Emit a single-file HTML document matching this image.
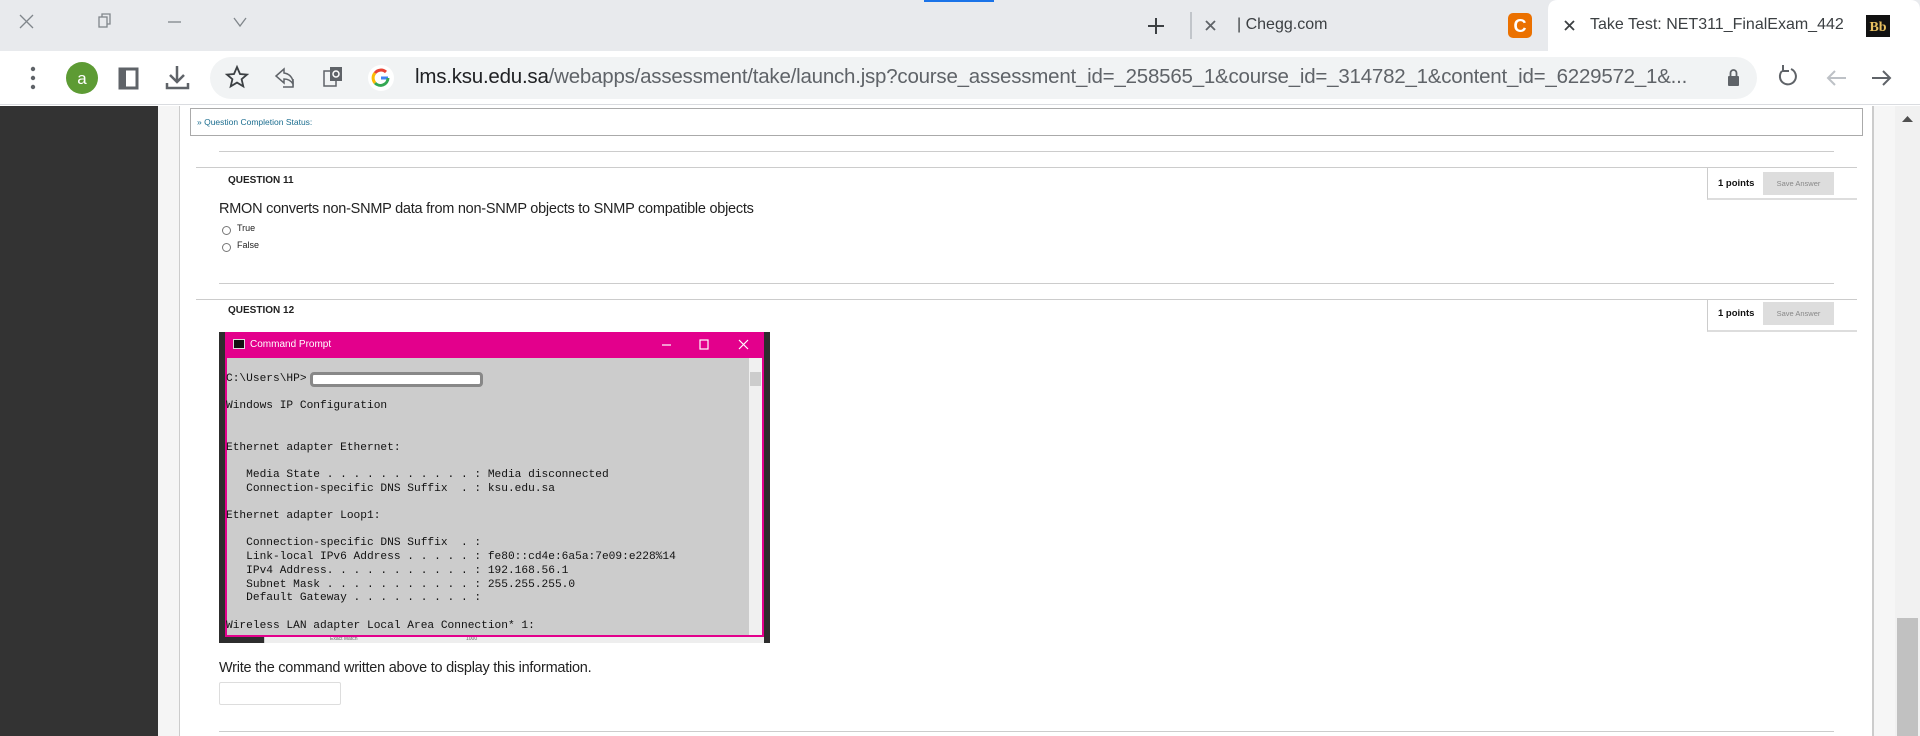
<!DOCTYPE html>
<html><head><meta charset="utf-8"><style>
*{margin:0;padding:0;box-sizing:border-box}
body{width:1920px;height:736px;overflow:hidden;position:relative;background:#fff;font-family:"Liberation Sans",sans-serif}
.a{position:absolute}
.mono{font-family:"Liberation Mono",monospace;font-size:11.2px;color:#111;white-space:pre;line-height:13.7px}
</style></head><body>
<div class="a" style="left:0;top:0;width:1920px;height:51px;background:#e8eaed"></div>
<div class="a" style="left:924px;top:0;width:70px;height:2px;background:#1a73e8"></div>
<svg class="a" style="left:0;top:0" width="1920" height="51">
<g stroke="#80868b" stroke-width="1.3" fill="none">
<path d="M20 15l13 13M33 15L20 28"/>
<rect x="99" y="17" width="8" height="10"/><path d="M102 17v-3h8v10h-3"/>
<path d="M168 22h13"/>
<path d="M234 18l6 8 6-8"/>
</g>
<g stroke="#3c4043" stroke-width="2" fill="none"><path d="M1156 18v16M1148 26h16"/></g>
<path d="M1191 12v27" stroke="#9aa0a6" stroke-width="1"/>
<g stroke="#5f6368" stroke-width="1.8"><path d="M1206 21l9 9M1215 21l-9 9"/></g>
<rect x="1508" y="13" width="24" height="25" rx="5" fill="#eb7100"/>
<text x="1520" y="32" fill="#fff" font-family="Liberation Sans" font-size="18" font-weight="bold" text-anchor="middle">C</text>
<path d="M1548 51V10q0-10 10-10h352q10 0 10 10v41z" fill="#fff"/>
<g stroke="#3c4043" stroke-width="1.8"><path d="M1565 21l9 9M1574 21l-9 9"/></g>
<rect x="1866" y="15" width="24" height="22" fill="#111"/>
<text x="1878" y="31" fill="#e8c060" font-family="Liberation Serif" font-size="14" font-weight="bold" text-anchor="middle">Bb</text>
</svg>
<div class="a" style="left:1237px;top:16px;font-size:16px;color:#3c4043">| Chegg.com</div>
<div class="a" style="left:1590px;top:16px;font-size:16px;color:#3c4043;white-space:nowrap;width:262px;overflow:hidden">Take Test: NET311_FinalExam_442</div>
<div class="a" style="left:0;top:51px;width:1920px;height:54px;background:#fff;border-bottom:1px solid #dadce0"></div>
<div class="a" style="left:210px;top:57px;width:1547px;height:42px;border-radius:21px;background:#f1f3f4"></div>
<svg class="a" style="left:0;top:51px" width="1920" height="54">
<g fill="#5f6368"><circle cx="33" cy="18" r="2.2"/><circle cx="33" cy="27" r="2.2"/><circle cx="33" cy="36" r="2.2"/></g>
<circle cx="82" cy="27" r="16" fill="#5d9b34"/>
<text x="82" y="33" fill="#fff" font-family="Liberation Sans" font-size="17" text-anchor="middle">a</text>
<rect x="120" y="18" width="17" height="19" fill="none" stroke="#5f6368" stroke-width="3"/><rect x="120" y="18" width="6" height="19" fill="#5f6368"/>
<g stroke="#5f6368" stroke-width="2.5" fill="none"><path d="M177 15v16M170 24l7 7 7-7M167 32v5h21v-5"/></g>
<path d="M237 16l3 7 7 .6-5.4 4.6 1.7 7.2L237 31.6l-6.3 3.8 1.7-7.2-5.4-4.6 7-.6z" fill="none" stroke="#3c4043" stroke-width="1.8"/>
<g stroke="#5f6368" stroke-width="1.5" fill="none"><path d="M284 18l-8 7 8 7v-4q6 0 9 5v-3q-2-7-9-8z"/><path d="M283 36h10v-8"/></g>
<g><rect x="324" y="20" width="12" height="15" fill="none" stroke="#5f6368" stroke-width="1.5"/><rect x="330" y="16" width="12" height="14" fill="#5f6368"/><circle cx="336" cy="23" r="3" fill="none" stroke="#fff" stroke-width="1.5"/></g>
<circle cx="381" cy="27" r="13" fill="#fff"/>
<path d="M388 27h-7" stroke="#4285f4" stroke-width="3"/>
<path d="M388 27a7.5 7.5 0 0 1-13 5" stroke="#34a853" stroke-width="3" fill="none"/>
<path d="M375 32a7.5 7.5 0 0 1 0-10" stroke="#fbbc05" stroke-width="3" fill="none"/>
<path d="M375 22a7.5 7.5 0 0 1 11-1" stroke="#ea4335" stroke-width="3" fill="none"/>
<rect x="1728" y="25" width="11" height="10" rx="1" fill="#5f6368"/><path d="M1730.5 25v-3a3 3 0 0 1 6 0v3" stroke="#5f6368" stroke-width="1.8" fill="none"/>
<g stroke="#5f6368" stroke-width="2" fill="none"><path d="M1782 20a8 8 0 1 0 9-2"/><path d="M1783 14v6h6"/></g>
<g stroke="#bdc1c6" stroke-width="2" fill="none"><path d="M1846 27h-18M1835 20l-7 7 7 7"/></g>
<g stroke="#5f6368" stroke-width="2" fill="none"><path d="M1872 27h18M1883 20l7 7-7 7"/></g>
</svg>
<div class="a" style="left:415px;top:65px;font-size:20.5px;color:#5f6368;white-space:nowrap;letter-spacing:-0.22px"><span style="color:#202124">lms.ksu.edu.sa</span>/webapps/assessment/take/launch.jsp?course_assessment_id=_258565_1&amp;course_id=_314782_1&amp;content_id=_6229572_1&amp;...</div>
<div class="a" style="left:0;top:106px;width:158px;height:630px;background:#333"></div>
<div class="a" style="left:158px;top:106px;width:22px;height:630px;background:#f5f5f5;border-right:1px solid #ccc"></div>
<div class="a" style="left:1872px;top:106px;width:23px;height:630px;background:#f6f6f6;border-left:2px solid #ccc"></div>
<div class="a" style="left:1895px;top:106px;width:25px;height:630px;background:#f1f1f1"></div>
<div class="a" style="left:1897px;top:618px;width:21px;height:118px;background:#c1c1c1"></div>
<svg class="a" style="left:1895px;top:112px" width="25" height="14"><path d="M7 10l5.5-6 5.5 6z" fill="#505050"/></svg>
<div class="a" style="left:190px;top:108px;width:1673px;height:28px;border:1px solid #aaa;background:#fff"></div>
<div class="a" style="left:197px;top:117px;font-size:8.5px;color:#1b6d8f">» Question Completion Status:</div>
<div class="a" style="left:219px;top:151px;width:1615px;height:1px;background:#ccc"></div>
<div class="a" style="left:196px;top:167px;width:1661px;height:1px;background:#ccc"></div>
<div class="a" style="left:228px;top:175px;font-size:10px;font-weight:bold;color:#222">QUESTION 11</div>
<div class="a" style="left:219px;top:201px;font-size:14.5px;color:#222;letter-spacing:-0.25px">RMON converts non-SNMP data from non-SNMP objects to SNMP compatible objects</div>
<div class="a" style="left:222px;top:226px;width:9px;height:9px;border:1px solid #777;border-radius:50%"></div>
<div class="a" style="left:237px;top:223px;font-size:9px;color:#222">True</div>
<div class="a" style="left:222px;top:243px;width:9px;height:9px;border:1px solid #777;border-radius:50%"></div>
<div class="a" style="left:237px;top:240px;font-size:9px;color:#222">False</div>
<div class="a" style="left:1707px;top:168px;width:150px;height:32px;border-left:1px solid #ccc;border-bottom:2px solid #ddd"></div>
<div class="a" style="left:1718px;top:178px;font-size:9.5px;font-weight:bold;color:#111">1 points</div>
<div class="a" style="left:1763px;top:172px;width:71px;height:23px;background:#ddd;font-size:7.5px;color:#888;text-align:center;line-height:23px">Save Answer</div>
<div class="a" style="left:219px;top:283px;width:1615px;height:1px;background:#ccc"></div>
<div class="a" style="left:196px;top:299px;width:1661px;height:1px;background:#ccc"></div>
<div class="a" style="left:228px;top:305px;font-size:10px;font-weight:bold;color:#222">QUESTION 12</div>
<div class="a" style="left:1707px;top:300px;width:150px;height:32px;border-left:1px solid #ccc;border-bottom:2px solid #ddd"></div>
<div class="a" style="left:1718px;top:308px;font-size:9.5px;font-weight:bold;color:#111">1 points</div>
<div class="a" style="left:1763px;top:302px;width:71px;height:23px;background:#ddd;font-size:7.5px;color:#888;text-align:center;line-height:23px">Save Answer</div>
<div class="a" style="left:219px;top:332px;width:551px;height:311px;background:#2d2d2d"></div>
<div class="a" style="left:264px;top:637px;width:500px;height:6px;background:#eee;border-left:1px solid #ccc"></div>
<div class="a" style="left:330px;top:636px;font-size:5px;color:#666">Exact Match</div>
<div class="a" style="left:466px;top:636px;font-size:5px;color:#666">1000</div>
<div class="a" style="left:225px;top:332px;width:539px;height:305px;background:#ccc;border:2px solid #e3008c;border-top:0"></div>
<div class="a" style="left:225px;top:332px;width:539px;height:26px;background:#e3008c"></div>
<div class="a" style="left:233px;top:339px;width:12px;height:10px;background:#111;border:1px solid #ddd"></div>
<div class="a" style="left:250px;top:339px;font-size:10px;color:#fff">Command Prompt</div>
<svg class="a" style="left:650px;top:332px" width="114" height="26"><g stroke="#fff" stroke-width="1.2" fill="none"><path d="M12 13h9"/><rect x="50" y="8" width="8" height="9"/><path d="M89 8l9 9M98 8l-9 9"/></g></svg>
<div class="a" style="left:749px;top:358px;width:13px;height:277px;background:#f0f0f0"></div>
<div class="a" style="left:750px;top:372px;width:11px;height:14px;background:#ccc"></div>
<div class="a mono" style="left:226px;top:373px">C:\Users\HP>

Windows IP Configuration


Ethernet adapter Ethernet:

   Media State . . . . . . . . . . . : Media disconnected
   Connection-specific DNS Suffix  . : ksu.edu.sa

Ethernet adapter Loop1:

   Connection-specific DNS Suffix  . :
   Link-local IPv6 Address . . . . . : fe80::cd4e:6a5a:7e09:e228%14
   IPv4 Address. . . . . . . . . . . : 192.168.56.1
   Subnet Mask . . . . . . . . . . . : 255.255.255.0
   Default Gateway . . . . . . . . . :

Wireless LAN adapter Local Area Connection* 1:</div>
<div class="a" style="left:310px;top:372px;width:173px;height:15px;background:#fff;border:3px solid #888;border-radius:4px"></div>
<div class="a" style="left:219px;top:660px;font-size:14.5px;color:#222;letter-spacing:-0.25px">Write the command written above to display this information.</div>
<div class="a" style="left:219px;top:682px;width:122px;height:23px;border:1px solid #ddd;border-radius:2px"></div>
<div class="a" style="left:219px;top:731px;width:1615px;height:1px;background:#ccc"></div>
</body></html>
